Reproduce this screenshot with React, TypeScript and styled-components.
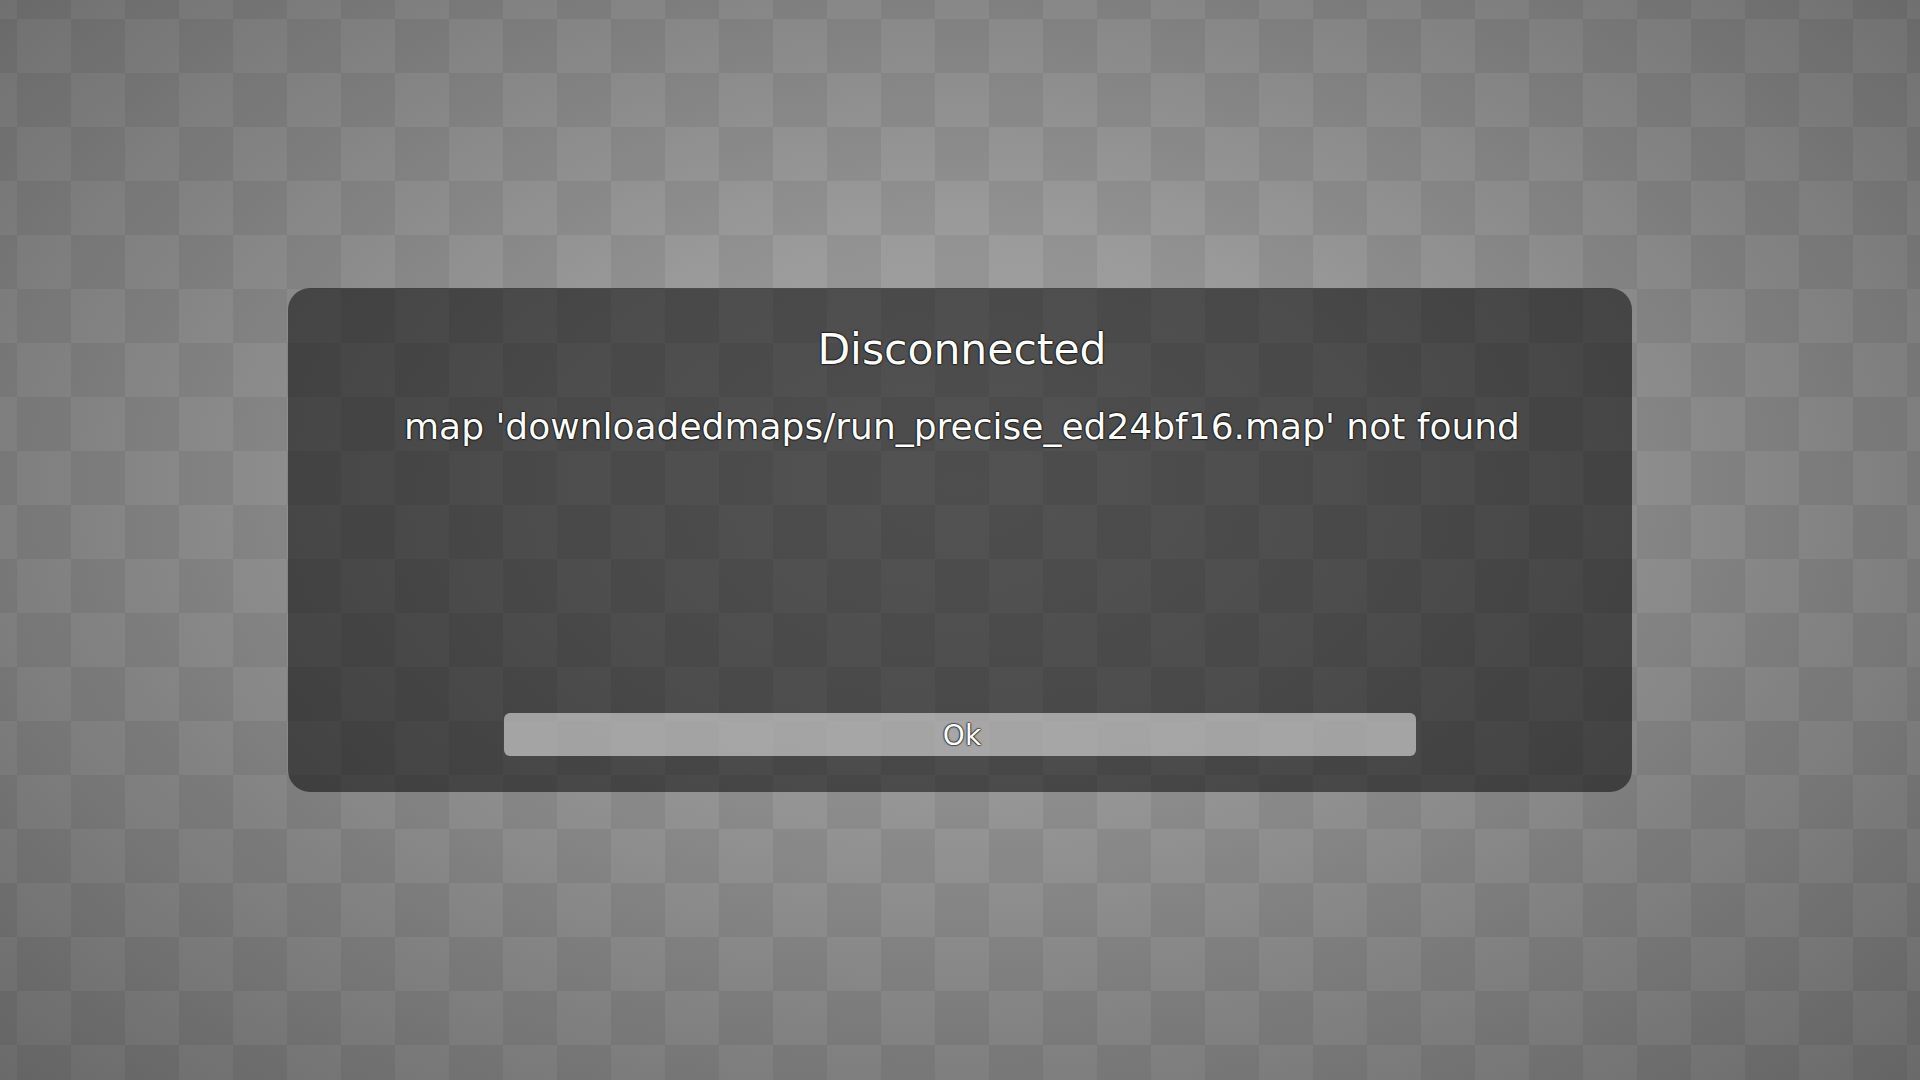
import React from "react";
import styled, { createGlobalStyle } from "styled-components";

const GlobalStyle = createGlobalStyle`
  html, body {
    margin: 0;
    padding: 0;
    width: 100%;
    height: 100%;
    overflow: hidden;
  }
  body {
    font-family: "DejaVu Sans", "Liberation Sans", sans-serif;
  }
`;

const outline = `
  text-shadow:
    0 0 2px rgba(0, 0, 0, 0.65),
    1px 0 1px rgba(0, 0, 0, 0.4),
    -1px 0 1px rgba(0, 0, 0, 0.4),
    0 1px 1px rgba(0, 0, 0, 0.4),
    0 -1px 1px rgba(0, 0, 0, 0.4);
`;

const Screen = styled.div`
  width: 1920px;
  height: 1080px;
  display: flex;
  align-items: center;
  justify-content: center;
  background-color: #8a8a8a;
  background-image:
    conic-gradient(
      rgba(0, 0, 0, 0.06) 0 25%,
      transparent 0 50%,
      rgba(0, 0, 0, 0.06) 0 75%,
      transparent 0 100%
    ),
    radial-gradient(
      ellipse farthest-corner at 50% 45%,
      #a6a6a6 0%,
      #9b9b9b 30%,
      #6a6a6a 100%
    );
  background-size: 108px 108px, 100% 100%;
  background-position: -37px -35px, 0 0;
`;

const Dialog = styled.div`
  box-sizing: border-box;
  width: 1344px;
  height: 504px;
  padding: 37px 216px 36px;
  border-radius: 22px;
  background: rgba(0, 0, 0, 0.5);
  display: flex;
  flex-direction: column;
  align-items: center;
  color: #ffffff;
`;

const Title = styled.div`
  padding-left: 4px;
  font-size: 42.5px;
  line-height: normal;
  white-space: nowrap;
  ${outline}
`;

const Message = styled.div`
  margin-top: 32px;
  padding-left: 4px;
  font-size: 36px;
  line-height: normal;
  white-space: nowrap;
  ${outline}
`;

const OkButton = styled.button`
  margin-top: auto;
  width: 100%;
  height: 43px;
  border: none;
  border-radius: 6px;
  background: rgba(255, 255, 255, 0.5);
  color: #ffffff;
  font-family: "DejaVu Sans", "Liberation Sans", sans-serif;
  font-size: 28px;
  line-height: 1;
  padding: 2px 0 0 4px;
  display: flex;
  align-items: center;
  justify-content: center;
  cursor: pointer;
  text-shadow:
    0 0 2px rgba(0, 0, 0, 0.65),
    1px 0 1px rgba(0, 0, 0, 0.4),
    -1px 0 1px rgba(0, 0, 0, 0.4),
    0 1px 1px rgba(0, 0, 0, 0.4),
    0 -1px 1px rgba(0, 0, 0, 0.4);
`;

export default function App() {
  return (
    <>
      <GlobalStyle />
      <Screen>
        <Dialog>
          <Title>Disconnected</Title>
          <Message>map 'downloadedmaps/run_precise_ed24bf16.map' not found</Message>
          <OkButton>Ok</OkButton>
        </Dialog>
      </Screen>
    </>
  );
}
